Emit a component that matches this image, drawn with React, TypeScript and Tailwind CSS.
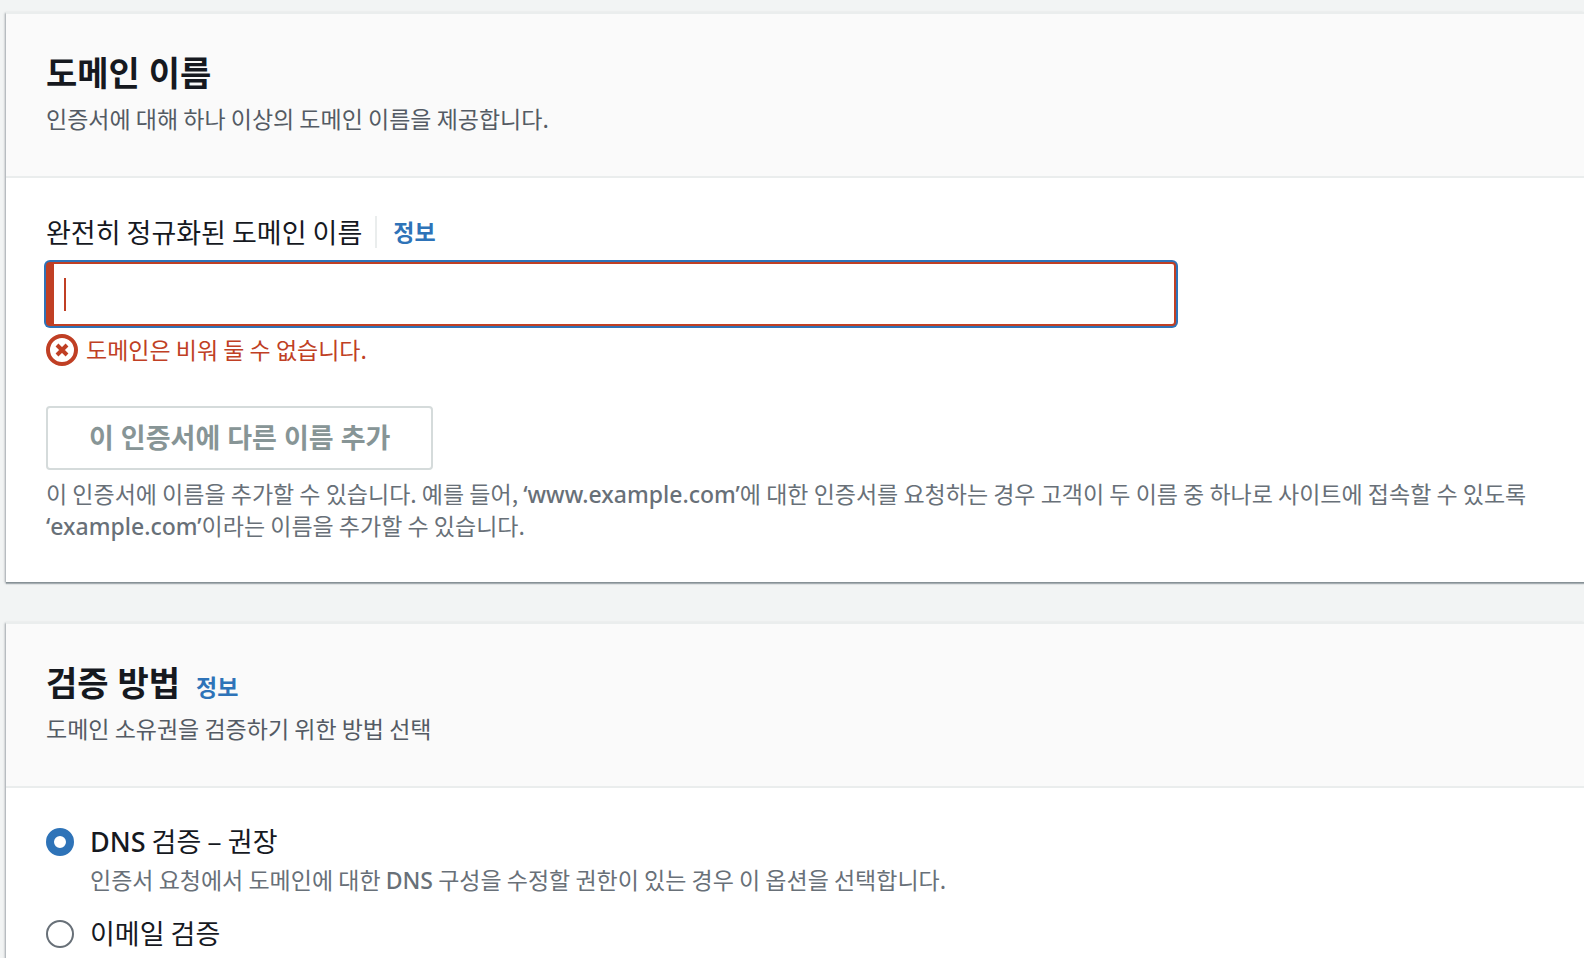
import type { ReactNode } from "react";

function InfoLink() {
  return (
    <a href="#info" className="font-['Noto_Sans','Noto_Sans_CJK_KR',sans-serif] text-[23px] leading-8 font-bold text-[#2e73b8]">
      정보
    </a>
  );
}

function Latin({ children }: { children: ReactNode }) {
  return <span className="font-['Noto_Sans',sans-serif] leading-none font-medium">{children}</span>;
}

type PanelProps = { title: string; description: string; info?: boolean; children: ReactNode };

function Panel({ title, description, info, children }: PanelProps) {
  return (
    <section className="shrink-0 border-t-2 border-[#eaeded] bg-white shadow-[0_1px_0_0_#879196,0_2px_1px_0_#a5adb1,-1px_1px_2px_0_#545b6480]">
      <header className="border-b-2 border-[#eaeded] bg-[#fafafa] px-10 pt-[37px] pb-[42px]">
        <div className="flex items-baseline gap-4">
          <h2 className="font-['Noto_Sans','Noto_Sans_CJK_KR',sans-serif] text-[34px] leading-[44px] font-bold text-[#16191f]">
            {title}
          </h2>
          {info && <InfoLink />}
        </div>
        <p className="mt-[7px] text-[23px] leading-8 text-[#545b64]">{description}</p>
      </header>
      {children}
    </section>
  );
}

function ErrorIcon() {
  return (
    <svg viewBox="0 0 32 32" className="size-8 shrink-0" fill="none" stroke="#c03f24" strokeWidth="4" aria-hidden="true">
      <circle cx="16" cy="16" r="14" />
      <path d="M11 11l10 10M21 11l-10 10" />
    </svg>
  );
}

type OptionProps = { id: string; label: ReactNode; description?: ReactNode; defaultChecked?: boolean };

function RadioOption({ id, label, description, defaultChecked }: OptionProps) {
  return (
    <div className="flex gap-4">
      <input
        type="radio"
        id={id}
        name="validation"
        defaultChecked={defaultChecked}
        className="mt-[7px] size-7 shrink-0 appearance-none rounded-full border-2 border-[#687078] bg-white checked:border-8 checked:border-[#2e73b8]"
      />
      <div>
        <label htmlFor={id} className="block text-[27px] leading-10 text-[#16191f]">
          {label}
        </label>
        {description && <p className="mt-[2px] text-[23px] leading-8 text-[#687078]">{description}</p>}
      </div>
    </div>
  );
}

export default function App() {
  return (
    <main className="flex h-screen flex-col gap-10 overflow-x-hidden overflow-y-auto bg-[#f2f4f4] pt-3 pl-[6px] font-['Noto_Sans_CJK_KR','Noto_Sans',sans-serif] break-keep [scrollbar-width:none]">
      <Panel title="도메인 이름" description="인증서에 대해 하나 이상의 도메인 이름을 제공합니다.">
        <div className="px-10 pt-[38px] pb-[41px]">
          <div className="flex items-center">
            <label htmlFor="domain" className="mr-[13px] text-[27px] leading-8 text-[#16191f]">
              완전히 정규화된 도메인 이름
            </label>
            <span className="flex border-l-2 border-[#eaeded] pl-4">
              <InfoLink />
            </span>
          </div>
          <div className="relative mt-[14px] max-w-[1130px]">
            <input
              id="domain"
              type="text"
              aria-invalid="true"
              aria-describedby="domain-error"
              className="block h-16 w-full rounded-sm border-2 border-l-8 border-[#c03f24] bg-white px-[10px] text-[27px] text-[#16191f] caret-[#c03f24] ring-2 ring-[#2e73b8] outline-none"
            />
            <span className="absolute top-4 left-[18px] h-[33px] w-[2px] bg-[#c03f24]" aria-hidden="true" />
          </div>
          <div id="domain-error" className="mt-2 flex gap-2">
            <ErrorIcon />
            <p className="text-[23px] leading-[30px] text-[#c03f24]">도메인은 비워 둘 수 없습니다.</p>
          </div>
          <button
            type="button"
            disabled
            className="mt-10 block h-16 rounded-sm border-2 border-[#d5dbdb] bg-white px-[41px] font-['Noto_Sans','Noto_Sans_CJK_KR',sans-serif] text-[27px] leading-8 font-bold text-[#879596]"
          >
            이 인증서에 다른 이름 추가
          </button>
          <p className="mt-[7px] text-[23px] leading-8 text-[#687078]">
            이 인증서에 이름을 추가할 수 있습니다. 예를 들어, <Latin>‘www.example.com’</Latin>에 대한 인증서를 요청하는 경우 고객이 두 이름 중 하나로 사이트에 접속할 수 있도록{" "}
            <Latin>‘example.com’</Latin>이라는 이름을 추가할 수 있습니다.
          </p>
        </div>
      </Panel>
      <Panel title="검증 방법" description="도메인 소유권을 검증하기 위한 방법 선택" info>
        <div className="flex flex-col gap-[18px] px-10 pt-[33px] pb-10">
          <RadioOption
            id="dns"
            label={
              <>
                <Latin>DNS</Latin> 검증 – 권장
              </>
            }
            description={
              <>
                인증서 요청에서 도메인에 대한 <Latin>DNS</Latin> 구성을 수정할 권한이 있는 경우 이 옵션을 선택합니다.
              </>
            }
            defaultChecked
          />
          <RadioOption id="email" label="이메일 검증" />
        </div>
      </Panel>
    </main>
  );
}
